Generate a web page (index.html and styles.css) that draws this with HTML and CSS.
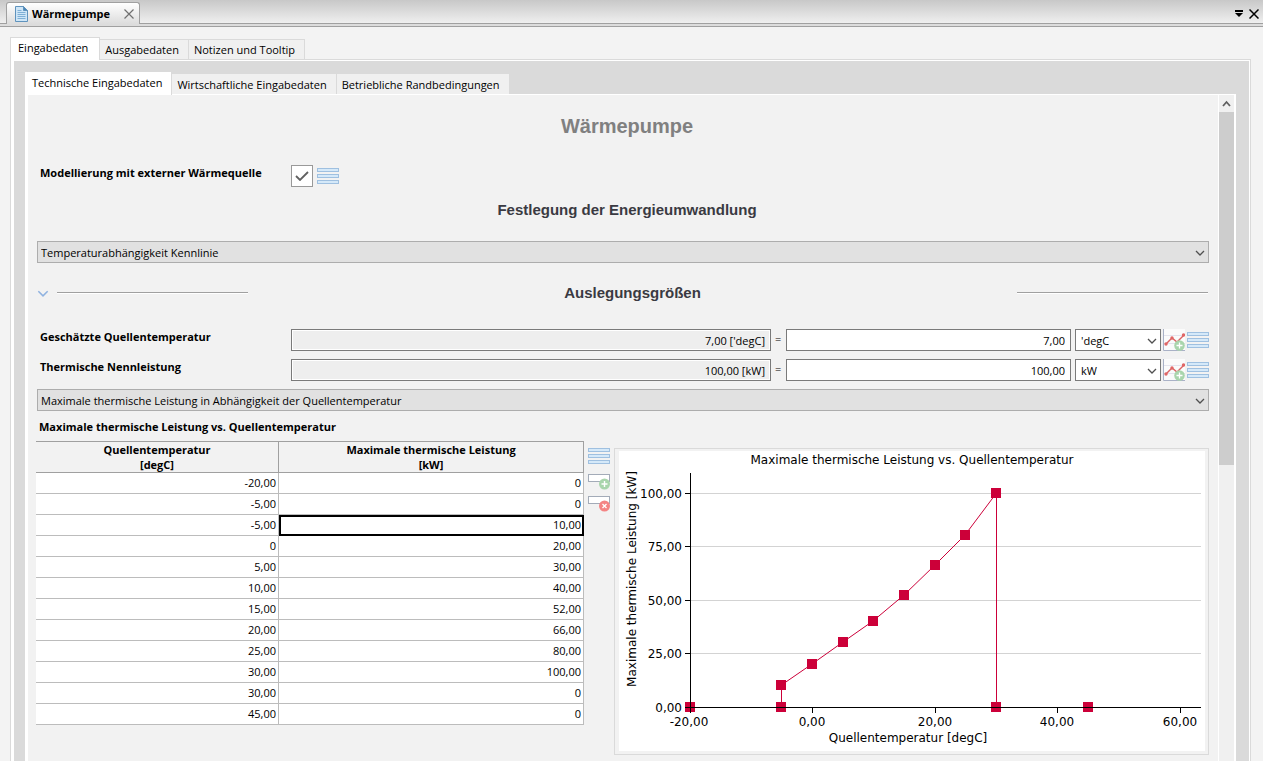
FILE: index.html
```html
<!DOCTYPE html>
<html lang="de">
<head>
	<meta charset="utf-8">
	<title>Wärmepumpe</title>
	<link rel="stylesheet" href="styles.css">
</head>
<body>
<!-- shared icons -->
<svg class="sprite" width="0" height="0">
	<symbol id="menu" viewBox="0 0 22 16">
		<g fill="#d5e9f9" stroke="#9fc0e0">
			<rect x=".5" y=".5" width="21" height="3"/>
			<rect x=".5" y="6.5" width="21" height="3"/>
			<rect x=".5" y="12.5" width="21" height="3"/>
		</g>
	</symbol>
	<symbol id="arrow" viewBox="0 0 10 6">
		<path d="M1 1l4 4 4-4" fill="none" stroke="currentColor" stroke-width="1.3"/>
	</symbol>
	<symbol id="series" viewBox="0 0 22 22">
		<rect width="22" height="22" fill="#fbfbfb"/>
		<path d="M0 6.5h22M0 14.5h22" stroke="#e4e4ee"/>
		<path d="M.5 0v21.500h21.500" fill="none" stroke="#a9b1c6"/>
		<path d="M3 15l6-6 5 4 7-7" fill="none" stroke="#dc6464" stroke-width="1.4"/>
		<g fill="#e06666"><circle cx="3" cy="15" r="1.7"/><circle cx="9" cy="9" r="1.7"/><circle cx="20.500" cy="6" r="1.7"/></g>
		<circle cx="16.500" cy="16.500" r="5.300" fill="#a9d5ac"/>
		<path d="M16.500 13.500v6M13.500 16.500h6" stroke="#fff" stroke-width="1.300"/>
	</symbol>
</svg>

<header class="titlebar">
	<div class="doc-tab">
		<svg width="13" height="16" viewBox="0 0 13 16">
			<path d="M.5.5h8l4 4v11H.5z" fill="#cfe6f7" stroke="#5f93bd"/>
			<path d="M8.500.5v4h4z" fill="#4d86b5" stroke="#5f93bd"/>
			<path d="M2.500 4.500h4M2.500 6.500h8M2.500 8.500h8M2.500 10.500h8M2.500 12.500h8" stroke="#7fb0d6"/>
		</svg>
		<span>Wärmepumpe</span>
		<button class="icon-btn" aria-label="Schließen">
			<svg width="10" height="10" viewBox="0 0 10 10"><path d="M.5.5l9 9M9.500.5l-9 9" stroke="#707070" stroke-width="1.200"/></svg>
		</button>
	</div>
	<div class="window-tools">
		<button class="icon-btn" aria-label="Liste">
			<svg width="8" height="8" viewBox="0 0 8 8"><path d="M0 0h8v2H0zM0 3h8L4 7z"/></svg>
		</button>
		<button class="icon-btn" aria-label="Fenster schließen">
			<svg width="10" height="10" viewBox="0 0 10 10"><path d="M.5.5l9 9M9.500.5l-9 9" stroke="#000" stroke-width="1.500"/></svg>
		</button>
	</div>
</header>

<main class="page">
	<nav class="tabs">
		<button class="tab active">Eingabedaten</button>
		<button class="tab">Ausgabedaten</button>
		<button class="tab">Notizen und Tooltip</button>
	</nav>
	<div class="panel">
		<nav class="tabs inner">
			<button class="tab active">Technische Eingabedaten</button>
			<button class="tab">Wirtschaftliche Eingabedaten</button>
			<button class="tab">Betriebliche Randbedingungen</button>
		</nav>
		<div class="sheet">
			<div class="content">
				<h1>Wärmepumpe</h1>

				<div class="row source">
					<label for="extern">Modellierung mit externer Wärmequelle</label>
					<span class="check">
						<input type="checkbox" id="extern" checked>
						<svg width="14" height="10" viewBox="0 0 14 10"><path d="M1 5l4 4 8-8" fill="none" stroke="#606060" stroke-width="1.800"/></svg>
					</span>
					<button class="icon-btn menu" aria-label="Menü"><svg width="22" height="16"><use href="#menu"/></svg></button>
				</div>

				<h2>Festlegung der Energieumwandlung</h2>
				<div class="select wide first">
					<select aria-label="Energieumwandlung"><option>Temperaturabhängigkeit Kennlinie</option></select>
					<svg width="10" height="6"><use href="#arrow"/></svg>
				</div>

				<div class="section">
					<button class="icon-btn fold" aria-label="Einklappen"><svg width="12" height="7"><use href="#arrow"/></svg></button>
					<span class="line"></span>
					<h3>Auslegungsgrößen</h3>
					<span class="line"></span>
				</div>

				<div class="fields">
					<div class="row">
						<label for="temp">Geschätzte Quellentemperatur</label>
						<input class="result" type="text" value="7,00 ['degC]" aria-label="Quellentemperatur Ergebnis" readonly>
						<span class="eq">=</span>
						<input class="value" type="text" id="temp" value="7,00">
						<div class="select unit">
							<select aria-label="Einheit Temperatur"><option>'degC</option></select>
							<svg width="10" height="6"><use href="#arrow"/></svg>
						</div>
						<button class="icon-btn series" aria-label="Zeitreihe"><svg width="22" height="22"><use href="#series"/></svg></button>
						<button class="icon-btn menu" aria-label="Menü"><svg width="22" height="16"><use href="#menu"/></svg></button>
					</div>
					<div class="row">
						<label for="power">Thermische Nennleistung</label>
						<input class="result" type="text" value="100,00 [kW]" aria-label="Nennleistung Ergebnis" readonly>
						<span class="eq">=</span>
						<input class="value" type="text" id="power" value="100,00">
						<div class="select unit">
							<select aria-label="Einheit Leistung"><option>kW</option></select>
							<svg width="10" height="6"><use href="#arrow"/></svg>
						</div>
						<button class="icon-btn series" aria-label="Zeitreihe"><svg width="22" height="22"><use href="#series"/></svg></button>
						<button class="icon-btn menu" aria-label="Menü"><svg width="22" height="16"><use href="#menu"/></svg></button>
					</div>
					<div class="select wide">
						<select aria-label="Abhängigkeit"><option>Maximale thermische Leistung in Abhängigkeit der Quellentemperatur</option></select>
						<svg width="10" height="6"><use href="#arrow"/></svg>
					</div>
				</div>

				<h4>Maximale thermische Leistung vs. Quellentemperatur</h4>
				<div class="curve">
					<table>
						<thead>
							<tr><th>Quellentemperatur<br>[degC]</th><th>Maximale thermische Leistung<br>[kW]</th></tr>
						</thead>
						<tbody>
							<tr><td>-20,00</td><td>0</td></tr>
							<tr><td>-5,00</td><td>0</td></tr>
							<tr><td>-5,00</td><td class="selected">10,00</td></tr>
							<tr><td>0</td><td>20,00</td></tr>
							<tr><td>5,00</td><td>30,00</td></tr>
							<tr><td>10,00</td><td>40,00</td></tr>
							<tr><td>15,00</td><td>52,00</td></tr>
							<tr><td>20,00</td><td>66,00</td></tr>
							<tr><td>25,00</td><td>80,00</td></tr>
							<tr><td>30,00</td><td>100,00</td></tr>
							<tr><td>30,00</td><td>0</td></tr>
							<tr><td>45,00</td><td>0</td></tr>
						</tbody>
					</table>
					<div class="table-tools">
						<button class="icon-btn" aria-label="Menü"><svg width="22" height="16"><use href="#menu"/></svg></button>
						<button class="icon-btn" aria-label="Zeile hinzufügen">
							<svg width="22" height="16" viewBox="0 0 22 16">
								<rect x=".5" y=".5" width="21" height="7" fill="#fff" stroke="#a3abb8"/>
								<circle cx="16.500" cy="10" r="5.500" fill="#a9d5ac"/>
								<path d="M16.500 7v6M13.500 10h6" stroke="#fff" stroke-width="1.400"/>
							</svg>
						</button>
						<button class="icon-btn" aria-label="Zeile löschen">
							<svg width="22" height="16" viewBox="0 0 22 16">
								<rect x=".5" y=".5" width="21" height="7" fill="#fff" stroke="#a3abb8"/>
								<circle cx="16.500" cy="10" r="5.500" fill="#f48484"/>
								<path d="M14.500 8l4 4M18.500 8l-4 4" stroke="#fff" stroke-width="1.300"/>
							</svg>
						</button>
					</div>
					<svg class="chart" viewBox="0 0 595 307">
						<rect x=".5" y=".5" width="594" height="306" fill="#f2f2f2" stroke="#dadada"/>
						<rect x="5" y="3" width="586" height="300" fill="#fff"/>
						<path class="grid" d="M77 45.500h510M77 98.500h510M77 152.500h510M77 205.500h510"/>
						<polyline class="curve-line" points="167.500,259 167.500,237 198,216 229,194 259,173 290,147 321,117 351,87 382.500,45 382.500,259"/>
						<g class="marks">
							<rect x="71" y="254" width="10" height="10"/>
							<rect x="162" y="254" width="10" height="10"/>
							<rect x="162" y="232" width="10" height="10"/>
							<rect x="193" y="211" width="10" height="10"/>
							<rect x="224" y="189" width="10" height="10"/>
							<rect x="254" y="168" width="10" height="10"/>
							<rect x="285" y="142" width="10" height="10"/>
							<rect x="316" y="112" width="10" height="10"/>
							<rect x="346" y="82" width="10" height="10"/>
							<rect x="377" y="40" width="10" height="10"/>
							<rect x="377" y="254" width="10" height="10"/>
							<rect x="469" y="254" width="10" height="10"/>
						</g>
						<path class="axis" d="M76.500 25v240M71 259.500h516M71 45.500h5M71 98.500h5M71 152.500h5M71 205.500h5M198.500 260v5M321.500 260v5M443.500 260v5M566.500 260v5"/>
						<text x="298" y="16" text-anchor="middle">Maximale thermische Leistung vs. Quellentemperatur</text>
						<g text-anchor="end">
							<text x="68" y="50">100,00</text>
							<text x="68" y="103">75,00</text>
							<text x="68" y="157">50,00</text>
							<text x="68" y="210">25,00</text>
							<text x="68" y="264">0,00</text>
						</g>
						<g text-anchor="middle">
							<text x="75" y="278">-20,00</text>
							<text x="198" y="278">0,00</text>
							<text x="321" y="278">20,00</text>
							<text x="443" y="278">40,00</text>
							<text x="566" y="278">60,00</text>
							<text x="294" y="294">Quellentemperatur [degC]</text>
							<text transform="translate(22 131) rotate(-90)">Maximale thermische Leistung [kW]</text>
						</g>
					</svg>
				</div>
			</div>
			<div class="scrollbar">
				<svg width="15" height="17" viewBox="0 0 15 17"><path d="M4 11l3.500-4 3.500 4" fill="none" stroke="#606060" stroke-width="1.800"/></svg>
				<div class="thumb"></div>
			</div>
		</div>
	</div>
</main>
</body>
</html>
```
FILE: styles.css
```css
*{
	box-sizing: border-box;
	margin: 0;
	padding: 0;
}
body{
	display: flex;
	flex-direction: column;
	height: 100vh;
	overflow: hidden;
	background: #f3f3f3;
	color: #000;
	font: 11px/16px "Open Sans", "Noto Sans", sans-serif;
}
button, input, select{
	font: inherit;
	color: inherit;
}
svg{
	display: block;
}
.sprite{
	position: absolute;
}
.icon-btn{
	border: 0;
	background: none;
	flex: none;
}

/* title bar */
.titlebar{
	display: flex;
	justify-content: space-between;
	flex: none;
	height: 27px;
	padding: 2px 4px 0 6px;
	border-bottom: 1px solid #a0a0a0;
	background: linear-gradient(#c8c8c8, #efefef 23px, #a0a0a0 23px, #a0a0a0 24px, #dcdcdc 24px);
}
.doc-tab{
	display: flex;
	align-items: center;
	gap: 4px;
	height: 22px;
	padding: 0 5px 0 8px;
	border: 1px solid #a0a0a0;
	border-bottom: 0;
	border-radius: 3px 3px 0 0;
	background: linear-gradient(#fff, #dcdcdc);
	font-weight: bold;
}
.doc-tab .icon-btn{
	margin-left: 10px;
}
.window-tools{
	display: flex;
	align-items: center;
	gap: 6px;
	height: 23px;
}

/* tabs */
.page{
	display: flex;
	flex-direction: column;
	flex: 1;
	min-height: 0;
	padding: 10px 12px 0 10px;
}
.tabs{
	display: flex;
	align-items: flex-end;
	height: 22px;
	flex: none;
}
.tab{
	height: 20px;
	padding: 1px 9px 0 5px;
	border: 1px solid #dadada;
	border-left: 0;
	border-bottom: 0;
	background: #f0f0f0;
	white-space: nowrap;
}
.tab.active{
	height: 23px;
	margin-bottom: -1px;
	padding: 0 11px 2px 7px;
	border-left: 1px solid #dadada;
	background: #fff;
	position: relative;
}
.inner .tab{
	border-top: 0;
}
.inner .tab:last-child{
	border-right: 0;
}
.inner .tab.active{
	padding-right: 9px;
	border-left: 0;
}
.panel{
	display: flex;
	flex-direction: column;
	flex: 1;
	min-height: 0;
	padding: 12px 14px 0;
	border: solid #dadada;
	border-width: 1px 1px 0 1px;
	background: #dadada;
	box-shadow: inset 3px 1px #fff, inset -1px 0 #fff;
}
.sheet{
	display: flex;
	flex: 1;
	min-height: 0;
	border: solid #fff;
	border-width: 1px 2px 0 3px;
	background: #f2f2f2;
}
.scrollbar{
	flex: none;
	width: 16px;
	border-left: 1px solid #fff;
	background: #f0f0f0;
}
.thumb{
	height: 53%;
	background: #cdcdcd;
}

/* form */
.content{
	flex: 1;
	min-width: 0;
	overflow: hidden;
	padding: 19px 9px 0;
}
h1, h2, h3{
	font-family: "Liberation Sans", Arial, sans-serif;
	text-align: center;
}
h1{
	padding-left: 8px;
	font-size: 20px;
	line-height: 24px;
	color: #808080;
}
h2, h3{
	font-size: 15px;
	line-height: 20px;
	color: #3a3a42;
}
h2{
	margin-top: 13px;
	padding-left: 8px;
}
h4{
	margin: 8px 2px 6px;
	font-size: 11px;
}
.row{
	display: flex;
	gap: 4px;
	height: 22px;
}
.row label{
	flex: none;
	width: 250px;
	padding-left: 3px;
	font-weight: bold;
}
.source{
	margin-top: 27px;
}
.check{
	display: grid;
	place-items: center;
}
.check input, .check svg{
	grid-area: 1 / 1;
}
.check svg{
	pointer-events: none;
}
.check input{
	appearance: none;
	width: 22px;
	height: 22px;
	border: 1px solid #999;
	background: #fff;
}
.menu{
	height: 22px;
}
.select{
	position: relative;
}
.select select{
	appearance: none;
	display: block;
	width: 100%;
	height: 22px;
	padding: 2px 20px 0 3px;
	border: 1px solid #adadad;
	border-radius: 0;
	background: #e1e1e1;
}
.select svg{
	position: absolute;
	right: 4px;
	top: 9px;
	color: #505050;
	pointer-events: none;
}
.first{
	margin-top: 21px;
}
.unit{
	flex: none;
	width: 86px;
}
.unit select{
	padding-left: 5px;
	border-color: #7a7a7a;
	background: #fff;
}
.section{
	display: flex;
	align-items: center;
	margin: 20px 1px 26px 0;
}
.section h3{
	flex: 1;
}
.fold{
	margin-right: 8px;
	color: #8fb2e0;
}
.line{
	width: 191px;
	height: 2px;
	border-top: 1px solid #a0a0a0;
	background: #fff;
}
.fields{
	display: flex;
	flex-direction: column;
	gap: 8px;
}
.result, .value{
	min-width: 0;
	height: 22px;
	padding: 0 5px;
	border: 1px solid #7a7a7a;
	text-align: right;
}
.result{
	flex: 480 480 480px;
	background: #eee;
	box-shadow: inset 0 0 0 1px #fff;
}
.value{
	flex: 285 285 285px;
}
.eq{
	width: 7px;
	line-height: 20px;
}
.series{
	margin: 0 -2px;
}

/* table and chart */
.curve{
	display: flex;
	align-items: flex-start;
	margin-left: -1px;
}
table{
	flex: none;
	width: 548px;
	border-collapse: separate;
	border-spacing: 0;
	table-layout: fixed;
	border-top: 1px solid #a0a0a0;
}
th{
	height: 31px;
	line-height: 15px;
	border-right: 1px solid #a0a0a0;
	border-bottom: 1px solid #a0a0a0;
}
th:first-child{
	width: 243px;
}
td{
	height: 21px;
	padding: 0 2px;
	line-height: 20px;
	border-right: 1px solid #bcbcbc;
	border-bottom: 1px solid #bcbcbc;
	background: #fff;
	text-align: right;
}
.selected{
	outline: 2px solid #000;
	outline-offset: -2px;
}
.table-tools{
	display: flex;
	flex-direction: column;
	gap: 6px;
	padding: 7px 4px;
}
.table-tools .icon-btn:first-child{
	margin-bottom: 4px;
}
.chart{
	flex: 1;
	min-width: 0;
	margin-top: 7px;
	font: 12px "DejaVu Sans", Verdana, sans-serif;
}
.grid{
	stroke: #d3d3d3;
}
.curve-line{
	fill: none;
	stroke: #cc0039;
}
.marks{
	fill: #cc0039;
}
.axis{
	fill: none;
	stroke: #000;
}
```
